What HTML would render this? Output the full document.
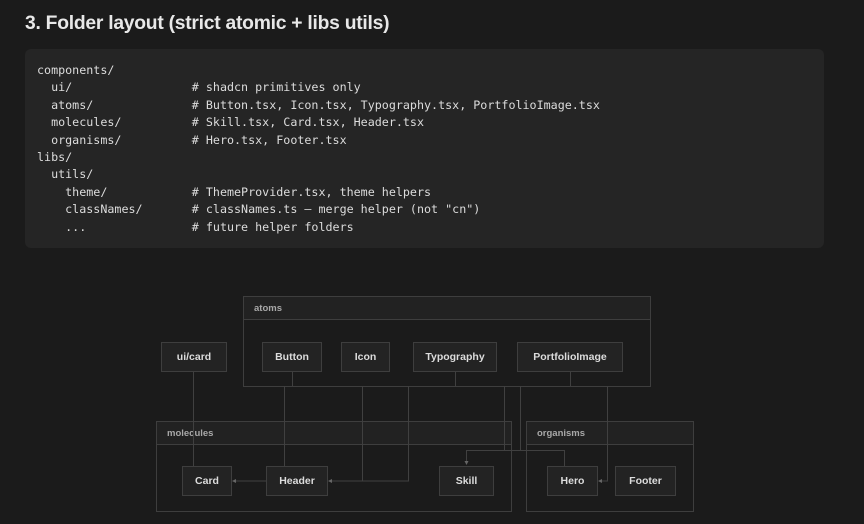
<!DOCTYPE html>
<html><head><meta charset="utf-8"><style>
html,body{margin:0;padding:0;background:#1b1b1b;width:864px;height:524px;overflow:hidden;font-family:"Liberation Sans",sans-serif}
h1{position:absolute;left:25px;top:13px;margin:0;font-size:19.3px;font-weight:bold;color:#e8e8e8;letter-spacing:-0.25px}
.code{position:absolute;left:25px;top:49px;width:799px;height:199px;background:#252525;border-radius:6px}
pre{margin:0;position:absolute;left:12px;top:13px;font-family:"DejaVu Sans Mono","Liberation Mono",monospace;font-size:11.7px;line-height:17.4px;color:#dcdcdc}
.g{position:absolute;border:1px solid #3e3e3e;box-sizing:border-box}
.g .h{height:23px;border-bottom:1px solid #3e3e3e;background:#222;color:#a8a8a8;font-size:9.5px;font-weight:bold;line-height:23px;padding-left:10px;box-sizing:border-box}
.n{position:absolute;border:1px solid #3e3e3e;background:#232323;box-sizing:border-box;color:#dcdcdc;font-size:10.5px;font-weight:bold;display:flex;align-items:center;justify-content:center}
svg{position:absolute;left:0;top:0}
</style></head><body>
<h1>3. Folder layout (strict atomic + libs utils)</h1>
<div class="code"><pre>components/
  ui/                 # shadcn primitives only
  atoms/              # Button.tsx, Icon.tsx, Typography.tsx, PortfolioImage.tsx
  molecules/          # Skill.tsx, Card.tsx, Header.tsx
  organisms/          # Hero.tsx, Footer.tsx
libs/
  utils/
    theme/            # ThemeProvider.tsx, theme helpers
    classNames/       # classNames.ts — merge helper (not "cn")
    ...               # future helper folders</pre></div>

<div class="g" style="left:243px;top:296px;width:408px;height:91px"><div class="h">atoms</div></div>
<div class="g" style="left:156px;top:421px;width:356px;height:91px"><div class="h">molecules</div></div>
<div class="g" style="left:526px;top:421px;width:168px;height:91px"><div class="h">organisms</div></div>

<svg width="864" height="524"><g stroke="#404040" stroke-width="1" fill="none">
<path d="M193.5 371V481H185"/>
<path d="M292.5 371V386"/>
<path d="M284.5 386V466"/>
<path d="M362.5 386V481H330"/>
<path d="M408.5 386V481H330"/>
<path d="M455.5 371V386"/>
<path d="M570.5 371V386"/>
<path d="M504.5 386V450.5H564.5V481H550"/>
<path d="M520.5 386V450.5H466.5V462"/>
<path d="M607.5 386V481H600"/>
<path d="M266 481H234"/>
</g>
<g fill="#666"><path d="M183 481l4-2v4z"/><path d="M232 481l4-2v4z"/><path d="M328 481l4-2v4z"/><path d="M548 481l4-2v4z"/><path d="M598 481l4-2v4z"/><path d="M466.5 465l-2-4h4z"/></g>
</svg>

<div class="n" style="left:161px;top:342px;width:66px;height:30px">ui/card</div>
<div class="n" style="left:262px;top:342px;width:60px;height:30px">Button</div>
<div class="n" style="left:341px;top:342px;width:49px;height:30px">Icon</div>
<div class="n" style="left:413px;top:342px;width:84px;height:30px">Typography</div>
<div class="n" style="left:517px;top:342px;width:106px;height:30px">PortfolioImage</div>
<div class="n" style="left:182px;top:466px;width:50px;height:30px">Card</div>
<div class="n" style="left:266px;top:466px;width:62px;height:30px">Header</div>
<div class="n" style="left:439px;top:466px;width:55px;height:30px">Skill</div>
<div class="n" style="left:547px;top:466px;width:51px;height:30px">Hero</div>
<div class="n" style="left:615px;top:466px;width:61px;height:30px">Footer</div>
</body></html>
